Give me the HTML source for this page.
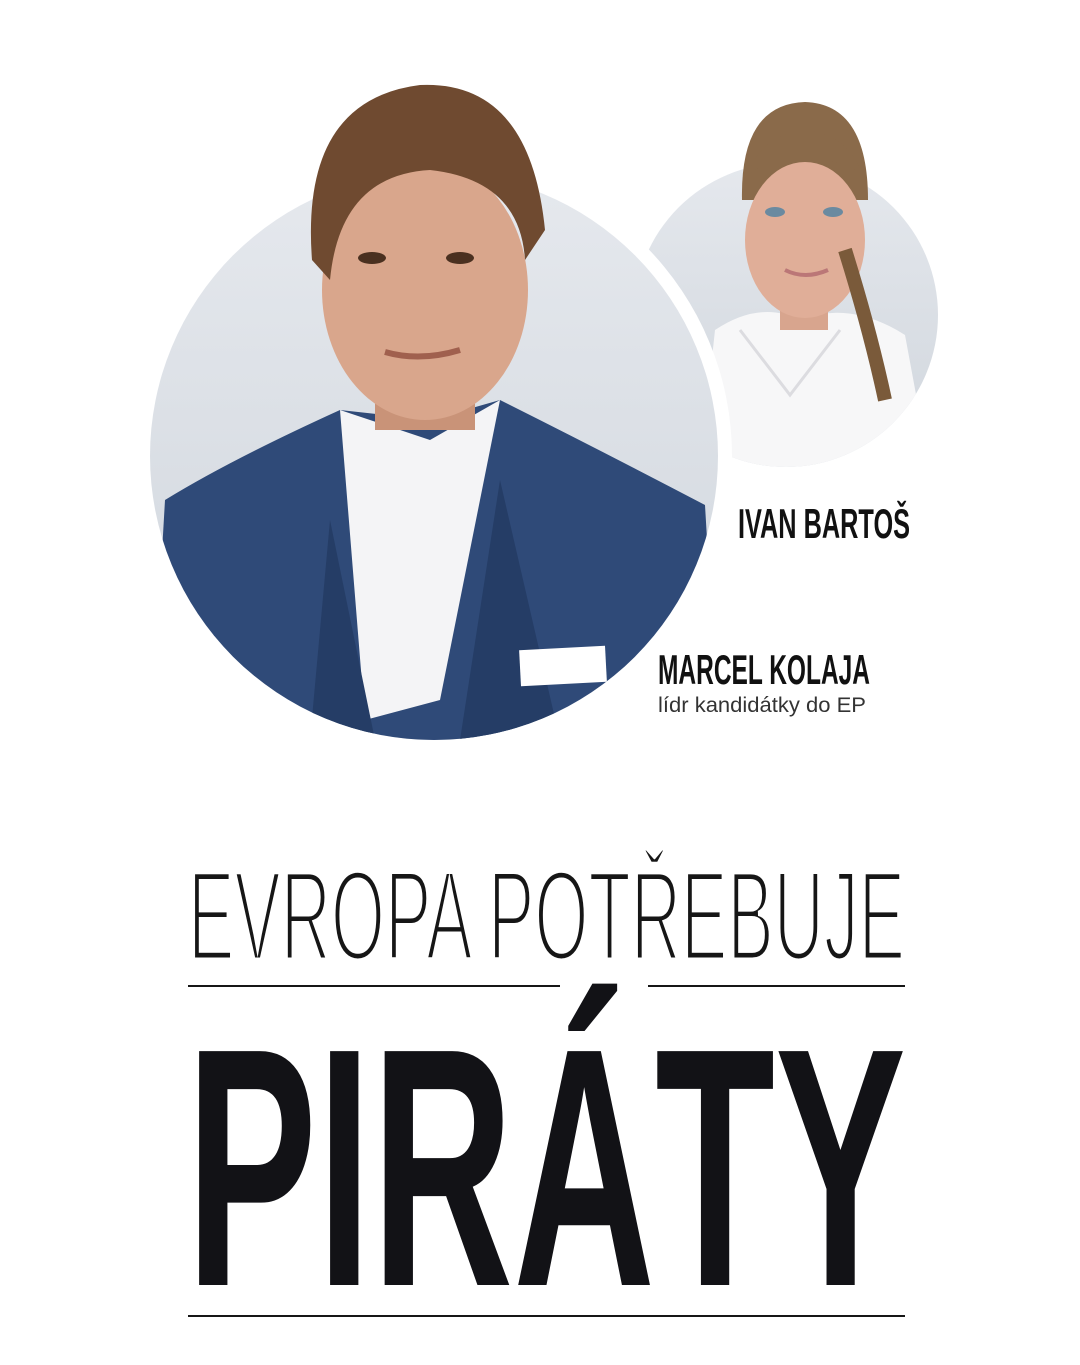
<!DOCTYPE html>
<html><head><meta charset="utf-8"><style>html,body{margin:0;padding:0;background:#fff}svg{display:block}</style></head>
<body>
<svg width="1080" height="1365" viewBox="0 0 1080 1365" xmlns="http://www.w3.org/2000/svg">
<defs>
<clipPath id="cb"><circle cx="434" cy="456" r="284"/></clipPath>
<clipPath id="cs"><circle cx="786" cy="315" r="152"/></clipPath>
<linearGradient id="sky" x1="0" y1="0" x2="0" y2="1"><stop offset="0" stop-color="#e6e9ee"/><stop offset="1" stop-color="#cfd5dc"/></linearGradient>
</defs>
<rect width="1080" height="1365" fill="#fff"/>
<g clip-path="url(#cs)">
<rect x="630" y="150" width="320" height="330" fill="url(#sky)"/>
<path d="M700 470 L715 330 Q760 300 800 320 Q850 300 905 335 L930 470Z" fill="#f7f7f8"/>
<path d="M740 330 L790 395 L840 330" fill="none" stroke="#dcdce0" stroke-width="3"/>
</g>
<circle cx="434" cy="456" r="298" fill="#fff"/>
<rect x="780" y="290" width="48" height="40" fill="#d8a58e"/>
<path d="M742 200 Q740 104 805 102 Q868 104 868 200Z" fill="#8a6a4a"/>
<ellipse cx="805" cy="240" rx="60" ry="78" fill="#e0ae98"/>
<path d="M748 175 Q760 135 805 130 Q850 135 862 175 Q845 160 805 158 Q765 160 748 175Z" fill="#8a6a4a"/>
<path d="M845 250 Q870 330 885 400" stroke="#7a5a3a" stroke-width="14" fill="none"/>
<ellipse cx="775" cy="212" rx="10" ry="5" fill="#6a8aa0"/><ellipse cx="833" cy="212" rx="10" ry="5" fill="#6a8aa0"/>
<path d="M785 270 Q805 280 828 270" stroke="#b77" stroke-width="4" fill="none"/>
<g clip-path="url(#cb)">
<rect x="140" y="160" width="590" height="590" fill="url(#sky)"/>
<path d="M150 760 L165 500 Q230 460 340 410 L430 420 L500 400 Q600 450 705 505 L720 760Z" fill="#2f4a78"/>
<path d="M340 410 L365 720 L440 700 L500 400 L430 440Z" fill="#f4f4f6"/>
<path d="M330 520 L375 740 L310 740Z" fill="#253d66"/>
<path d="M460 740 L500 480 L560 740Z" fill="#253d66"/>
<rect x="520" y="648" width="86" height="36" fill="#fff" transform="rotate(-3 563 666)"/>
</g>
<rect x="375" y="350" width="100" height="80" fill="#c99378"/>
<ellipse cx="425" cy="290" rx="103" ry="130" fill="#d9a68c"/>
<path d="M312 260 Q300 100 420 85 Q530 80 545 230 L525 260 Q520 180 430 170 Q340 175 330 280Z" fill="#6f4a30"/>
<ellipse cx="372" cy="258" rx="14" ry="6" fill="#4a3020"/><ellipse cx="460" cy="258" rx="14" ry="6" fill="#4a3020"/>
<path d="M385 352 Q420 362 460 350" stroke="#a0604e" stroke-width="6" fill="none"/>
<text x="738" y="538" font-family="Liberation Sans, sans-serif" font-weight="bold" font-size="42" textLength="172" lengthAdjust="spacingAndGlyphs" fill="#111">IVAN BARTOŠ</text>
<text x="658" y="684" font-family="Liberation Sans, sans-serif" font-weight="bold" font-size="42" textLength="212" lengthAdjust="spacingAndGlyphs" fill="#111">MARCEL KOLAJA</text>
<text x="658" y="712" font-family="Liberation Sans, sans-serif" font-size="21" textLength="208" lengthAdjust="spacingAndGlyphs" fill="#333">lídr kandidátky do EP</text>
<text x="188" y="960" font-family="Liberation Sans, sans-serif" font-size="128" textLength="717" lengthAdjust="spacingAndGlyphs" fill="#161616" stroke="#fff" stroke-width="5">EVROPA POTŘEBUJE</text>
<rect x="188" y="985" width="372" height="2" fill="#161616"/>
<rect x="648" y="985" width="257" height="2" fill="#161616"/>
<text x="186" y="1285" font-family="Liberation Sans, sans-serif" font-weight="bold" font-size="340" textLength="720" lengthAdjust="spacingAndGlyphs" fill="#121216">PIRÁTY</text>
<rect x="188" y="1315" width="717" height="2" fill="#161616"/>
</svg>
</body></html>
